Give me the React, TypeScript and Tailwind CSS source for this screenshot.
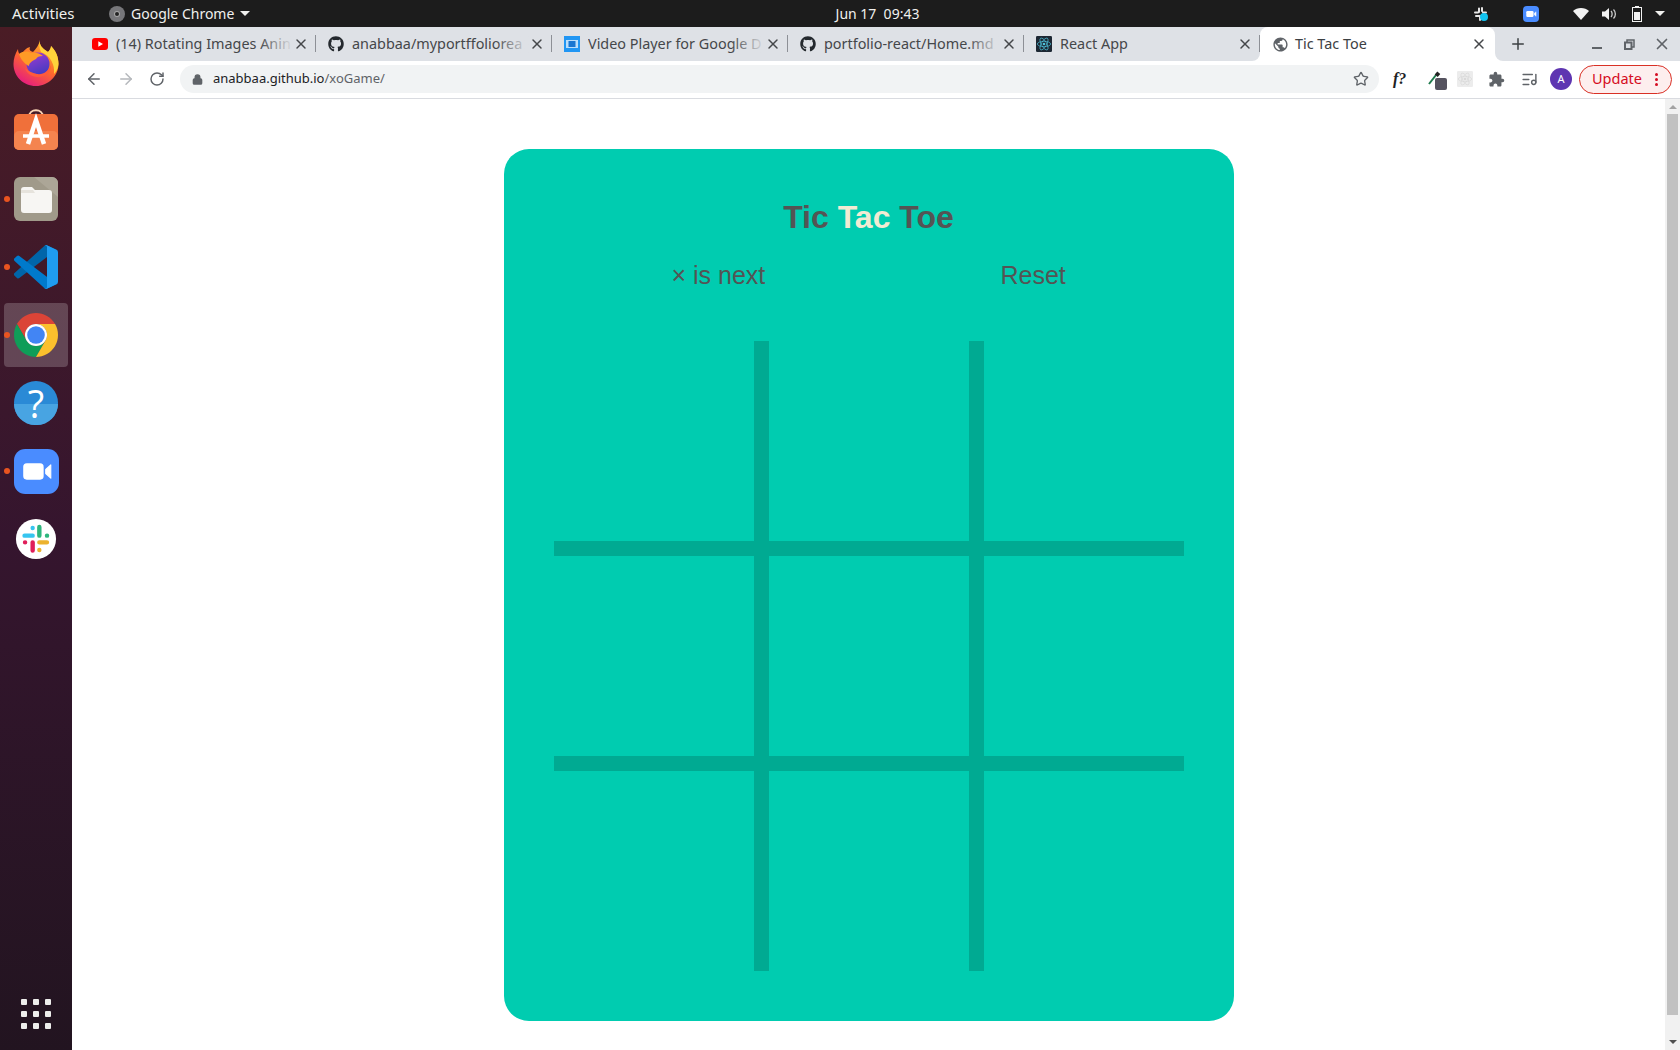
import { ArrowLeft, ArrowRight, Lock, Plus, RotateCw, Star, X, ListMusic } from "lucide-react";
import { FaGithub } from "react-icons/fa";
import { MdExtension, MdPublic } from "react-icons/md";

function Chrome({ size }: { size: number }) {
  return (
    <svg width={size} height={size} viewBox="4 4 40 40">
      <path d="M6.68 14A20 20 0 0 1 41.32 14H24A10 10 0 0 0 15.34 29Z" fill="#db4437" />
      <path d="M6.68 14A20 20 0 0 0 24 44L32.66 29A10 10 0 0 1 15.34 29Z" fill="#0f9d58" />
      <path d="M24 44A20 20 0 0 0 41.32 14H24A10 10 0 0 1 32.66 29Z" fill="#fbc02d" />
      <circle cx="24" cy="24" r="10" fill="#fff" />
      <circle cx="24" cy="24" r="8" fill="#4285f4" />
    </svg>
  );
}

function Firefox() {
  return (
    <svg width="46" height="48" viewBox="0 0 46 48">
      <defs>
        <linearGradient id="ffa" x1="0.8" y1="0" x2="0.2" y2="1">
          <stop offset="0" stopColor="#ffbd2e" />
          <stop offset="0.5" stopColor="#ff6a2b" />
          <stop offset="1" stopColor="#e31587" />
        </linearGradient>
        <linearGradient id="ffb" x1="0.3" y1="0" x2="0.7" y2="1">
          <stop offset="0" stopColor="#9b3bd0" />
          <stop offset="1" stopColor="#3f3bc0" />
        </linearGradient>
      </defs>
      <path d="M27 1C26 6 29 9 35 13C37 11 38 9 38 7C43 12 45.500 18 45.500 25C45.500 37 35 47 23 47C10 47 .5 37 .5 25C.5 20 2 15 5 10C5 13 6 15 8 16C10 12 13 9 17 8C16 11 17 12 20 13C23 10 26 6 27 1Z" fill="url(#ffa)" />
      <path d="M27 1C26 6 29 9 35 13C37 11 38 9 38 7C43 12 45.500 18 45.500 25C45 30 43 33 41 35C42 26 38 17 28 13C26 9 26 5 27 1Z" fill="#ffd43b" />
      <circle cx="25" cy="25" r="11.500" fill="url(#ffb)" />
      <path d="M6 15C10 12 15 12 18 14C22 13 27 14 30 17C26 17 24 18 23 20C19 22 16 24 16 27C12 25 8 21 6 15Z" fill="#ff9a26" />
      <path d="M12 29C14 36 22 40 30 37C35 35 38 31 38 26C36 32 30 36 24 35C19 34 15 32 12 29Z" fill="#ff5a3c" />
    </svg>
  );
}

function Store() {
  return (
    <svg className="mb-[6px]" width="44" height="44" viewBox="0 0 44 44">
      <path d="M15 11C15 2 29 2 29 11" fill="none" stroke="#fbd7b8" strokeWidth="2" />
      <rect y="8" width="44" height="36" rx="5" fill="#f0703a" />
      <rect y="25" width="44" height="19" rx="5" fill="#f4844f" />
      <path d="M14 38L22 14L30 38" fill="none" stroke="#fff" strokeWidth="4.500" />
      <path d="M9 30H35" stroke="#fff" strokeWidth="3.500" />
    </svg>
  );
}

function Files() {
  return (
    <svg width="44" height="44" viewBox="0 0 44 44">
      <rect width="44" height="44" rx="6" fill="#a09a8a" />
      <path d="M20 0H38C41 0 44 3 44 6V20Z" fill="#aca697" />
      <path d="M7 13C7 11 8 10 10 10H18L21 13H35C37 13 38 14 38 16V33C38 35 37 36 35 36H10C8 36 7 35 7 33Z" fill="#f7f6f3" />
      <path d="M7 16H21L19 13H7Z" fill="#e6e3dc" />
    </svg>
  );
}

function VsCode() {
  return (
    <svg width="44" height="44" viewBox="0 0 100 100">
      <path d="M96.46 10.8 75.86.87a6.23 6.23 0 0 0-7.1 1.2L1.3 63.6a4.16 4.16 0 0 0 0 6.16l5.5 5a4.16 4.16 0 0 0 5.32.24L93.32 13.4c2.72-2.07 6.63-.13 6.63 3.29v-.24a6.25 6.25 0 0 0-3.49-5.63Z" fill="#0065a9" />
      <path d="M96.46 89.2 75.86 99.13a6.23 6.23 0 0 1-7.1-1.2L1.3 36.4a4.16 4.16 0 0 1 0-6.16l5.5-5a4.16 4.16 0 0 1 5.32-.24l81.2 61.6c2.72 2.07 6.63.13 6.63-3.29v.24a6.25 6.25 0 0 1-3.49 5.63Z" fill="#007acc" />
      <path d="M75.86 99.14a6.23 6.23 0 0 1-7.1-1.2c2.3 2.3 6.24.67 6.24-2.58V4.64c0-3.25-3.94-4.88-6.24-2.58a6.23 6.23 0 0 1 7.1-1.2l20.6 9.9A6.25 6.25 0 0 1 100 16.4v67.2a6.25 6.25 0 0 1-3.54 5.63Z" fill="#1f9cf0" />
    </svg>
  );
}

function Help() {
  return (
    <div className="relative w-[44px] h-[44px] rounded-full bg-[#2a8ad6] flex items-center justify-center">
      <div className="absolute left-0 right-0 bottom-0 h-[21px] rounded-b-full bg-[#48a4e2]" />
      <span className="relative text-white text-[38px] leading-[44px] font-normal font-['Open_Sans',sans-serif]">?</span>
    </div>
  );
}

function ZoomIcon({ size }: { size: number }) {
  return (
    <svg width={size} height={size} viewBox="0 0 44 44">
      <rect width="44" height="44" rx="11" fill="#4a8cff" />
      <rect x="9" y="14" width="20" height="16" rx="3.500" fill="#fff" />
      <path d="M31 20L36 15.500V28.500L31 24Z" fill="#fff" stroke="#fff" strokeLinejoin="round" />
    </svg>
  );
}

function Slack({ size }: { size: number }) {
  return (
    <svg width={size} height={size} viewBox="0 0 44 44">
      <circle cx="22" cy="22" r="21" fill="#fff" />
      <g strokeWidth="4.600" strokeLinecap="round" fill="none">
        <path d="M10 18.500H18.500M18.500 10.500V10.600" stroke="#36c5f0" />
        <path d="M25.500 9.500V18.500M33.500 18.500H33.600" stroke="#2eb67d" />
        <path d="M33.500 25.500H25.500M25.500 33.500V33.600" stroke="#ecb22e" />
        <path d="M18.500 25.500V34M10.500 25.500H10.600" stroke="#e01e5a" />
      </g>
    </svg>
  );
}

function ReactMark({ size, color, bg }: { size: number; color: string; bg: string }) {
  return (
    <svg width={size} height={size} viewBox="0 0 24 24">
      <rect width="24" height="24" rx="2" fill={bg} />
      <g fill="none" stroke={color} strokeWidth="1">
        <ellipse cx="12" cy="12" rx="10" ry="4" />
        <ellipse cx="12" cy="12" rx="10" ry="4" transform="rotate(60 12 12)" />
        <ellipse cx="12" cy="12" rx="10" ry="4" transform="rotate(120 12 12)" />
      </g>
      <circle cx="12" cy="12" r="2" fill={color} />
    </svg>
  );
}

function DockItem({ children, running, active }: { children: React.ReactNode; running?: boolean; active?: boolean }) {
  return (
    <div className="relative h-[68px] flex items-center justify-center">
      {active && <div className="absolute left-[4px] right-[4px] top-[2px] bottom-[2px] rounded-[4px] bg-white/20" />}
      {running && <div className="absolute left-[4px] top-[31px] w-[6px] h-[6px] rounded-full bg-[#e95420]" />}
      <div className="relative">{children}</div>
    </div>
  );
}

function Dock() {
  return (
    <div className="w-[72px] shrink-0 flex flex-col justify-between pt-[2px] pb-[21px] bg-gradient-to-b from-[#4a1c25] via-[#35152e] to-[#221420]">
      <div>
        <DockItem><Firefox /></DockItem>
        <DockItem><Store /></DockItem>
        <DockItem running><Files /></DockItem>
        <DockItem running><VsCode /></DockItem>
        <DockItem running active><Chrome size={44} /></DockItem>
        <DockItem><Help /></DockItem>
        <DockItem running><ZoomIcon size={45} /></DockItem>
        <DockItem><Slack size={42} /></DockItem>
      </div>
      <div className="grid grid-cols-3 gap-[6px] w-[30px] mx-auto">
        {[1, 2, 3, 4, 5, 6, 7, 8, 9].map((i) => (
          <div key={i} className="w-[6px] h-[6px] rounded-[1px] bg-[#eeeeec]" />
        ))}
      </div>
    </div>
  );
}

function TopBar() {
  return (
    <div className="h-[27px] shrink-0 flex items-center bg-[#1c1c1c] text-[#f0f0ee] text-[14px] font-['Noto_Sans',sans-serif]">
      <div className="w-[97px] pl-[12px] text-[15px]">Activities</div>
      <div className="w-[12px]" />
      <div className="w-[16px] h-[16px] rounded-full bg-[#77777a] flex items-center justify-center">
        <div className="w-[6px] h-[6px] rounded-full bg-[#222] border border-white/60" />
      </div>
      <div className="ml-[6px] w-[103px] whitespace-nowrap">Google Chrome</div>
      <div className="ml-[6px] w-0 h-0 border-x-[5px] border-x-transparent border-t-[5px] border-t-[#f0f0ee]" />
      <div className="ml-[585px] w-[85px] text-center whitespace-pre">Jun 17  09:43</div>
      <div className="ml-auto flex items-center pr-[15px]">
        <svg className="mr-[35px]" width="14" height="14" viewBox="0 0 14 14">
          <path d="M5 1.500V5M1 5.500H4M2 9H5M6 9V13M8 1V4M9 5.500H12" stroke="#e6e6e6" strokeWidth="2" strokeLinecap="round" />
          <circle cx="10" cy="10" r="4" fill="#12c3f0" />
        </svg>
        <div className="mr-[34px]"><ZoomIcon size={16} /></div>
        <svg className="mr-[13px]" width="16" height="14" viewBox="0 0 16 14">
          <path d="M0 4C4 0 12 0 16 4L8 13Z" fill="#f2f2f2" />
        </svg>
        <svg className="mr-[15px]" width="15" height="14" viewBox="0 0 15 14">
          <path d="M0 4.500H3L7 1V13L3 9.500H0Z" fill="#f2f2f2" />
          <path d="M9 4C10.500 5.500 10.500 8.500 9 10M11.500 2.500C14 5 14 9 11.500 11.500" stroke="#ccc" strokeWidth="1.300" fill="none" />
        </svg>
        <svg className="mr-[13px]" width="10" height="16" viewBox="0 0 10 16">
          <rect x="3" width="4" height="2" fill="#f2f2f2" />
          <rect x=".5" y="1.500" width="9" height="14" fill="none" stroke="#f2f2f2" />
          <rect x="2" y="6" width="6" height="8" fill="#f2f2f2" />
        </svg>
        <div className="w-0 h-0 border-x-[5px] border-x-transparent border-t-[5px] border-t-[#f0f0ee]" />
      </div>
    </div>
  );
}

function Tab({ icon, title, fade = true }: { icon: React.ReactNode; title: string; fade?: boolean }) {
  return (
    <div className="w-[236px] h-full shrink-0 flex items-center pl-[12px] relative">
      <div className="w-[16px] h-[16px] shrink-0 flex items-center justify-center">{icon}</div>
      <div className="relative ml-[8px] w-[177px] overflow-hidden whitespace-nowrap text-[14.400px] text-[#45474a]">
        {title}
        {fade && <div className="absolute right-0 top-0 bottom-0 w-[34px] bg-gradient-to-r from-[#dee1e6]/0 to-[#dee1e6]" />}
      </div>
      <X className="text-[#45474a]" size={16} strokeWidth={2.2} />
      <div className="absolute right-0 top-[8px] bottom-[9px] w-px bg-[#8d9096]" />
    </div>
  );
}

function TabStrip() {
  return (
    <div className="h-[34px] shrink-0 flex items-center bg-[#dee1e6] pl-[8px] font-['Noto_Sans',sans-serif]">
      <Tab
        title="(14) Rotating Images Anin"
        icon={
          <svg width="16" height="12" viewBox="0 0 16 12">
            <rect width="16" height="12" rx="3" fill="#ff0000" />
            <path d="M6.300 3.300L11 6L6.300 8.700Z" fill="#fff" />
          </svg>
        }
      />
      <Tab title="anabbaa/myportffoliorea" icon={<FaGithub size={16} className="text-[#24292e]" />} />
      <Tab
        title="Video Player for Google D"
        icon={
          <svg width="16" height="16" viewBox="0 0 16 16">
            <rect width="16" height="16" fill="#2196f3" />
            <rect x="2" y="4" width="12" height="8" fill="#bbdefb" />
            <rect x="4.500" y="5" width="7" height="6" fill="#1976d2" />
          </svg>
        }
      />
      <Tab title="portfolio-react/Home.md" icon={<FaGithub size={16} className="text-[#24292e]" />} />
      <Tab title="React App" fade={false} icon={<ReactMark size={16} color="#4fc3dc" bg="#1c2733" />} />
      <div className="relative w-[235px] h-[34px] shrink-0 flex items-center pl-[12px] bg-white rounded-t-[8px]">
        <div className="absolute left-[-8px] bottom-0 w-[8px] h-[8px] bg-white">
          <div className="w-full h-full rounded-br-[8px] bg-[#dee1e6]" />
        </div>
        <div className="absolute right-[-8px] bottom-0 w-[8px] h-[8px] bg-white">
          <div className="w-full h-full rounded-bl-[8px] bg-[#dee1e6]" />
        </div>
        <MdPublic size={17} className="text-[#5f6368] shrink-0" />
        <div className="ml-[6px] w-[176px] text-[14.400px] text-[#3c4043] whitespace-nowrap">Tic Tac Toe</div>
        <X className="text-[#45474a]" size={16} strokeWidth={2.2} />
      </div>
      <Plus className="ml-[14px] text-[#3c4043]" size={18} strokeWidth={2} />
      <div className="ml-[65px] mt-[8px] w-[10px] h-[2px] bg-[#5f6368]" />
      <svg className="ml-[22px]" width="11" height="11" viewBox="0 0 11 11">
        <path d="M3 3V1H10V8H8" fill="none" stroke="#5f6368" strokeWidth="1.500" />
        <rect x="1" y="3.500" width="6.500" height="6.500" fill="none" stroke="#5f6368" strokeWidth="2" />
      </svg>
      <X className="ml-[18px] text-[#5f6368]" size={18} strokeWidth={2.2} />
    </div>
  );
}

function Toolbar() {
  return (
    <div className="h-[38px] shrink-0 flex items-center bg-white border-b border-[#d9dbe0] pb-[1px] font-['Noto_Sans',sans-serif]">
      <ArrowLeft className="ml-[13px] text-[#5f6368]" size={18} strokeWidth={2} />
      <ArrowRight className="ml-[14px] text-[#b5b8bc]" size={18} strokeWidth={2} />
      <RotateCw className="ml-[14px] text-[#5f6368]" size={16} strokeWidth={2.2} />
      <div className="ml-[15px] w-[1199px] h-[28px] rounded-full bg-[#f1f3f4] flex items-center pl-[12px]">
        <Lock size={11} strokeWidth={3} fill="currentColor" className="text-[#5f6368]" />
        <div className="ml-[10px] text-[13px] text-[#202124]">
          anabbaa.github.io<span className="text-[#5f6368]">/xoGame/</span>
        </div>
        <Star className="ml-auto mr-[10px] text-[#5f6368]" size={16} strokeWidth={2} />
      </div>
      <div className="ml-[14px] w-[16px] text-[16px] font-bold italic font-['Liberation_Serif',serif] text-[#202124] whitespace-nowrap">f?</div>
      <div className="relative ml-[19px] w-[19px] h-[19px]">
        <svg width="13" height="15" viewBox="0 0 13 15">
          <path d="M1 14L8 5" stroke="#1f7a4d" strokeWidth="2" />
          <path d="M8 3L11 5.500" stroke="#222" strokeWidth="4" />
        </svg>
        <div className="absolute right-0 bottom-[-1px] w-[12px] h-[12px] rounded-[2px] bg-[#55535f]" />
      </div>
      <div className="ml-[10px]">
        <ReactMark size={16} color="#d8d8d8" bg="#ececec" />
      </div>
      <MdExtension className="ml-[15px] text-[#5f6368]" size={17} />
      <ListMusic className="ml-[16px] text-[#5f6368]" size={17} strokeWidth={2} />
      <div className="ml-[12px] w-[22px] h-[22px] rounded-full bg-[#5e35b1] text-white text-[11px] flex items-center justify-center">A</div>
      <div className="ml-[7px] w-[93px] h-[29px] rounded-full border border-[#d93025] bg-[#fdeeee] flex items-center pl-[12px] text-[14.500px] text-[#d50c22]">
        Update
        <div className="ml-[13px] flex flex-col gap-[2px]">
          <div className="w-[3px] h-[3px] rounded-full bg-[#d50c22]" />
          <div className="w-[3px] h-[3px] rounded-full bg-[#d50c22]" />
          <div className="w-[3px] h-[3px] rounded-full bg-[#d50c22]" />
        </div>
      </div>
    </div>
  );
}

function Board() {
  return (
    <div className="ml-[50px] grid grid-cols-[200px_200px_200px] grid-rows-[200px_200px_200px] gap-[15px] w-[630px] h-[630px] bg-[#00aa92]">
      {[1, 2, 3, 4, 5, 6, 7, 8, 9].map((i) => (
        <div key={i} className="bg-[#00ccb0]" />
      ))}
    </div>
  );
}

function Scrollbar() {
  return (
    <div className="w-[15px] shrink-0 flex flex-col bg-[#f1f1f1]">
      <div className="h-[15px] flex items-center justify-center">
        <div className="w-0 h-0 border-x-[4px] border-x-transparent border-b-[4px] border-b-[#a3a3a3]" />
      </div>
      <div className="mx-[2px] h-[901px] bg-[#c1c1c1]" />
      <div className="mt-auto h-[17px] flex items-center justify-center">
        <div className="w-0 h-0 border-x-[4px] border-x-transparent border-t-[4px] border-t-[#505050]" />
      </div>
    </div>
  );
}

export default function App() {
  return (
    <div className="w-[1680px] h-[1050px] overflow-hidden flex flex-col bg-white">
      <TopBar />
      <div className="flex-1 flex min-h-0">
        <Dock />
        <div className="flex-1 flex flex-col min-w-0">
          <TabStrip />
          <Toolbar />
          <div className="flex-1 flex min-h-0">
            <div className="flex-1 flex justify-center pt-[50px]">
              <div className="w-[730px] h-[872px] rounded-[25px] bg-[#00ccb0] font-['Liberation_Sans',sans-serif] text-[#545454]">
                <h1 className="mt-[50px] text-center text-[32px] leading-[37px] font-bold">
                  Tic <span className="text-[#f2ebd3]">Tac</span> Toe
                </h1>
                <div className="mt-[24px] h-[30px] flex items-center text-[25px] leading-[30px]">
                  <div className="ml-[168px] w-[329px]">× is next</div>
                  <div>Reset</div>
                </div>
                <div className="mt-[51px]">
                  <Board />
                </div>
              </div>
            </div>
            <Scrollbar />
          </div>
        </div>
      </div>
    </div>
  );
}
